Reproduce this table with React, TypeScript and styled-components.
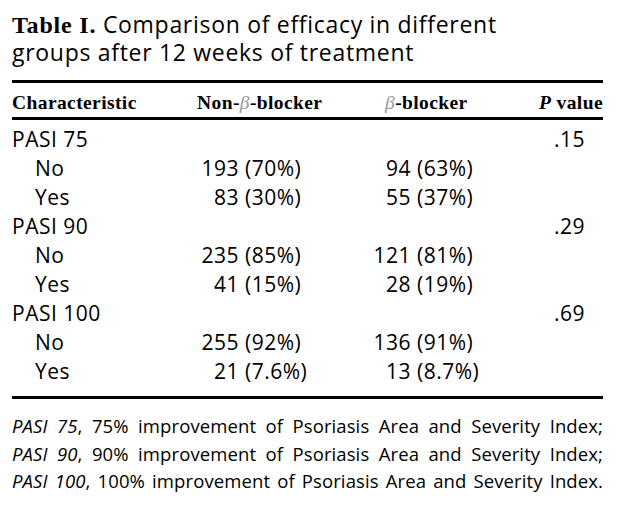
import styled, { createGlobalStyle } from "styled-components";

const GlobalStyle = createGlobalStyle`
  body {
    margin: 0;
    background: #ffffff;
  }
`;

const Page = styled.div`
  width: 591px;
  padding: 10px 0 0 12px;
  font-family: "Open Sans", "Noto Sans", sans-serif;
  color: #000;
`;

const Caption = styled.div`
  font-size: 23px;
  line-height: 28.4px;
  letter-spacing: 0.7px;
`;

const CaptionLabel = styled.span`
  font-family: "Liberation Serif", serif;
  font-weight: 700;
  font-size: 24px;
  line-height: 20px;
  letter-spacing: 0.8px;
`;

const Table = styled.div`
  margin-top: 13px;
  border-top: 3px solid #000;
  border-bottom: 3px solid #000;
`;

const columns = "185px 173px 168px 1fr";

const HeadRow = styled.div`
  display: grid;
  grid-template-columns: ${columns};
  padding-top: 5px;
  line-height: 29px;
  border-bottom: 3px solid #000;
  font-family: "Liberation Serif", serif;
  font-weight: 700;
  font-size: 19.5px;
  letter-spacing: 0.4px;
`;

const HeadCell = styled.div<{ $indent?: number; $right?: boolean }>`
  padding-left: ${(p) => p.$indent ?? 0}px;
  text-align: ${(p) => (p.$right ? "right" : "left")};
  white-space: nowrap;
`;

const Beta = styled.span`
  font-style: italic;
  font-weight: 400;
  color: #9a9a9a;
`;

const Italic = styled.i`
  font-style: italic;
`;

const Body = styled.div`
  padding: 5px 0 10px;
`;

const Row = styled.div`
  display: grid;
  grid-template-columns: ${columns};
  height: 29px;
  line-height: 29px;
  font-size: 21px;
  letter-spacing: 0.5px;
`;

const Label = styled.div<{ $sub?: boolean }>`
  padding-left: ${(p) => (p.$sub ? 23 : 0)}px;
  white-space: nowrap;
`;

const Cell = styled.div`
  white-space: nowrap;
`;

const Count = styled.span<{ $w: number }>`
  display: inline-block;
  width: ${(p) => p.$w}px;
  text-align: right;
`;

const Pct = styled.span`
  margin-left: 6px;
`;

const PValue = styled.div`
  text-align: right;
  padding-right: 18px;
`;

const Notes = styled.div`
  margin-top: 13px;
  font-size: 18.5px;
  line-height: 27.7px;
  letter-spacing: 0.1px;
`;

const NoteLine = styled.div`
  white-space: nowrap;
  text-align: justify;
  text-align-last: justify;
`;

type Group = {
  name: string;
  p: string;
  rows: { label: string; a: [string, string]; b: [string, string] }[];
};

const groups: Group[] = [
  {
    name: "PASI 75",
    p: ".15",
    rows: [
      { label: "No", a: ["193", "(70%)"], b: ["94", "(63%)"] },
      { label: "Yes", a: ["83", "(30%)"], b: ["55", "(37%)"] },
    ],
  },
  {
    name: "PASI 90",
    p: ".29",
    rows: [
      { label: "No", a: ["235", "(85%)"], b: ["121", "(81%)"] },
      { label: "Yes", a: ["41", "(15%)"], b: ["28", "(19%)"] },
    ],
  },
  {
    name: "PASI 100",
    p: ".69",
    rows: [
      { label: "No", a: ["255", "(92%)"], b: ["136", "(91%)"] },
      { label: "Yes", a: ["21", "(7.6%)"], b: ["13", "(8.7%)"] },
    ],
  },
];

const notes = [
  ["PASI 75", "75%"],
  ["PASI 90", "90%"],
  ["PASI 100", "100%"],
];

export default function App() {
  return (
    <>
      <GlobalStyle />
      <Page>
        <Caption>
          <CaptionLabel>Table I.</CaptionLabel> Comparison of efficacy in different
          <br />
          groups after 12 weeks of treatment
        </Caption>
        <Table>
          <HeadRow>
            <HeadCell>Characteristic</HeadCell>
            <HeadCell>
              Non-<Beta>β</Beta>-blocker
            </HeadCell>
            <HeadCell $indent={15}>
              <Beta>β</Beta>-blocker
            </HeadCell>
            <HeadCell $right>
              <Italic>P</Italic> value
            </HeadCell>
          </HeadRow>
          <Body>
            {groups.map((g) => (
              <div key={g.name}>
                <Row>
                  <Label>{g.name}</Label>
                  <Cell />
                  <Cell />
                  <PValue>{g.p}</PValue>
                </Row>
                {g.rows.map((r) => (
                  <Row key={r.label}>
                    <Label $sub>{r.label}</Label>
                    <Cell>
                      <Count $w={42}>{r.a[0]}</Count>
                      <Pct>{r.a[1]}</Pct>
                    </Cell>
                    <Cell>
                      <Count $w={41}>{r.b[0]}</Count>
                      <Pct>{r.b[1]}</Pct>
                    </Cell>
                    <Cell />
                  </Row>
                ))}
              </div>
            ))}
          </Body>
        </Table>
        <Notes>
          {notes.map(([abbr, pct], i) => (
            <NoteLine key={abbr}>
              <Italic>{abbr}</Italic>, {pct} improvement of Psoriasis Area and
              Severity Index{i === notes.length - 1 ? "." : ";"}
            </NoteLine>
          ))}
        </Notes>
      </Page>
    </>
  );
}
